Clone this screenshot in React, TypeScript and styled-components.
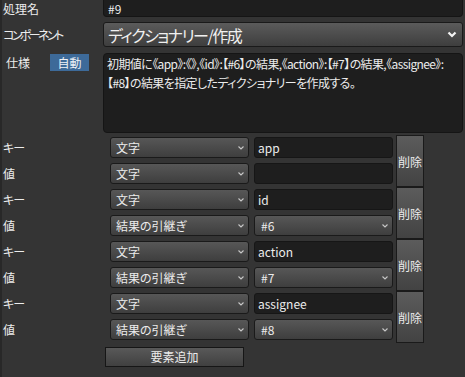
import React from "react";
import styled, { createGlobalStyle } from "styled-components";

const GlobalStyle = createGlobalStyle`
  html, body {
    margin: 0;
    padding: 0;
    background: #343434;
  }
  body {
    font-family: "Noto Sans CJK JP", "Noto Sans", sans-serif;
    font-feature-settings: "palt" 1;
    color: #ececec;
  }
`;

const Page = styled.div`
  width: 465px;
  height: 377px;
  overflow: hidden;
  background: #343434;
  box-shadow: inset 2px 0 0 #282828;
  box-sizing: border-box;
`;

const FormRow = styled.div<{ $top?: number }>`
  display: grid;
  grid-template-columns: 103px 1fr;
  align-items: center;
  padding-right: 2px;
  margin-top: ${(p) => p.$top ?? 0}px;
`;

// katakana in the original UI font is much narrower, so squeeze it
const Label = styled.div<{ $indent?: number; $squeeze?: number }>`
  font-size: 12px;
  line-height: 16px;
  padding-left: ${(p) => p.$indent ?? 3}px;
  letter-spacing: ${(p) => p.$squeeze ?? 0}px;
  white-space: nowrap;
`;

const NameInput = styled.input`
  height: 17px;
  box-sizing: border-box;
  background: #1e1e1e;
  border: 1px solid #151515;
  border-top: none;
  border-radius: 0 0 4px 4px;
  color: #ececec;
  font: inherit;
  font-size: 12px;
  padding: 0 4px;
  outline: none;
`;

const ComponentSelect = styled.div`
  height: 25px;
  box-sizing: border-box;
  display: flex;
  align-items: center;
  justify-content: space-between;
  padding: 0 5px 0 4px;
  background: linear-gradient(#5b5b5b, #3e3e3e);
  border: 1px solid #1a1a1a;
  border-radius: 3px;
  font-size: 16px;
  letter-spacing: -1.5px;
  color: #f0f0f0;
`;

const SpecRow = styled(FormRow)`
  align-items: start;
`;

const SpecLabels = styled.div`
  display: flex;
  align-items: center;
  padding-top: 1px;
`;

const Badge = styled.div`
  margin-left: 20px;
  width: 39px;
  height: 17px;
  background: #3d6a99;
  display: flex;
  align-items: center;
  justify-content: center;
  font-size: 12px;
  color: #eef2f7;
`;

const Description = styled.textarea`
  height: 80px;
  box-sizing: border-box;
  resize: none;
  background: #1e1e1e;
  border: 1px solid #151515;
  border-radius: 4px;
  color: #ececec;
  font: inherit;
  font-size: 12px;
  letter-spacing: -0.6px;
  line-height: 19px;
  padding: 0 3px;
  outline: none;
  overflow: hidden;
`;

const Pairs = styled.div`
  margin-top: 2px;
  display: flex;
  flex-direction: column;
`;

const Pair = styled.div`
  display: flex;
  align-items: stretch;
  height: 52px;
`;

const PairRows = styled.div`
  display: flex;
  flex-direction: column;
  gap: 5px;
  padding: 2px 0 3px;
`;

const EntryRow = styled.div`
  display: flex;
  align-items: center;
  height: 21px;
  gap: 5px;
`;

const EntryLabel = styled.div`
  width: 102px;
  padding-left: 3px;
  font-size: 12px;
  line-height: 16px;
  letter-spacing: -1px;
`;

const SmallSelect = styled.div<{ $pad?: number }>`
  width: 139px;
  height: 21px;
  box-sizing: border-box;
  display: flex;
  align-items: center;
  justify-content: space-between;
  padding: 0 4px 0 ${(p) => p.$pad ?? 5}px;
  background: linear-gradient(#575757, #3e3e3e);
  border: 1px solid #1a1a1a;
  border-radius: 3px;
  font-size: 12px;
  color: #ececec;
`;

const TextField = styled.input`
  width: 139px;
  height: 21px;
  box-sizing: border-box;
  background: #1e1e1e;
  border: 1px solid #161616;
  border-radius: 3px;
  color: #ececec;
  font: inherit;
  font-size: 12px;
  padding: 0 3px;
  outline: none;
`;

const DeleteButton = styled.button`
  margin-left: 3px;
  width: 28px;
  box-sizing: border-box;
  padding: 0;
  background: linear-gradient(#5c5c5c, #434343);
  border: 1px solid #1a1a1a;
  color: #ececec;
  font: inherit;
  font-size: 12px;
`;

const AddButton = styled.button`
  margin-left: 105px;
  width: 139px;
  height: 20px;
  box-sizing: border-box;
  padding: 0;
  background: linear-gradient(#595959, #404040);
  border: 1px solid #161616;
  color: #ececec;
  font: inherit;
  font-size: 12px;
`;

const Chevron = ({ big }: { big?: boolean }) =>
  big ? (
    <svg width="10" height="7" viewBox="0 0 10 7">
      <polyline points="1.5,1.5 5,5 8.5,1.5" fill="none" stroke="#f4f4f4" strokeWidth="2.2" />
    </svg>
  ) : (
    <svg width="6" height="4" viewBox="0 0 6 4">
      <polyline points="0.5,0.5 3,3 5.5,0.5" fill="none" stroke="#c8c8c8" strokeWidth="1.1" />
    </svg>
  );

type Entry = {
  key: string;
  valueType: string;
  value: string;
};

const entries: Entry[] = [
  { key: "app", valueType: "文字", value: "" },
  { key: "id", valueType: "結果の引継ぎ", value: "#6" },
  { key: "action", valueType: "結果の引継ぎ", value: "#7" },
  { key: "assignee", valueType: "結果の引継ぎ", value: "#8" },
];

const description =
  "初期値に《app》:《》,《id》:【#6】の結果,《action》:【#7】の結果,《assignee》:\n【#8】の結果を指定したディクショナリーを作成する。";

const App: React.FC = () => {
  return (
    <>
      <GlobalStyle />
      <Page>
        <FormRow>
          <Label>処理名</Label>
          <NameInput defaultValue="#9" />
        </FormRow>
        <FormRow $top={5}>
          <Label $squeeze={-2.6}>コンポーネント</Label>
          <ComponentSelect>
            <span>ディクショナリー/作成</span>
            <Chevron big />
          </ComponentSelect>
        </FormRow>
        <SpecRow $top={6}>
          <SpecLabels>
            <Label $indent={6}>仕様</Label>
            <Badge>自動</Badge>
          </SpecLabels>
          <Description defaultValue={description} />
        </SpecRow>
        <Pairs>
          {entries.map((e) => (
            <Pair key={e.key}>
              <PairRows>
                <EntryRow>
                  <EntryLabel>キー</EntryLabel>
                  <SmallSelect>
                    <span>文字</span>
                    <Chevron />
                  </SmallSelect>
                  <TextField defaultValue={e.key} />
                </EntryRow>
                <EntryRow>
                  <EntryLabel>値</EntryLabel>
                  <SmallSelect>
                    <span>{e.valueType}</span>
                    <Chevron />
                  </SmallSelect>
                  {e.valueType === "文字" ? (
                    <TextField defaultValue={e.value} />
                  ) : (
                    <SmallSelect $pad={6}>
                      <span>{e.value}</span>
                      <Chevron />
                    </SmallSelect>
                  )}
                </EntryRow>
              </PairRows>
              <DeleteButton>削除</DeleteButton>
            </Pair>
          ))}
        </Pairs>
        <AddButton>要素追加</AddButton>
      </Page>
    </>
  );
};

export default App;
